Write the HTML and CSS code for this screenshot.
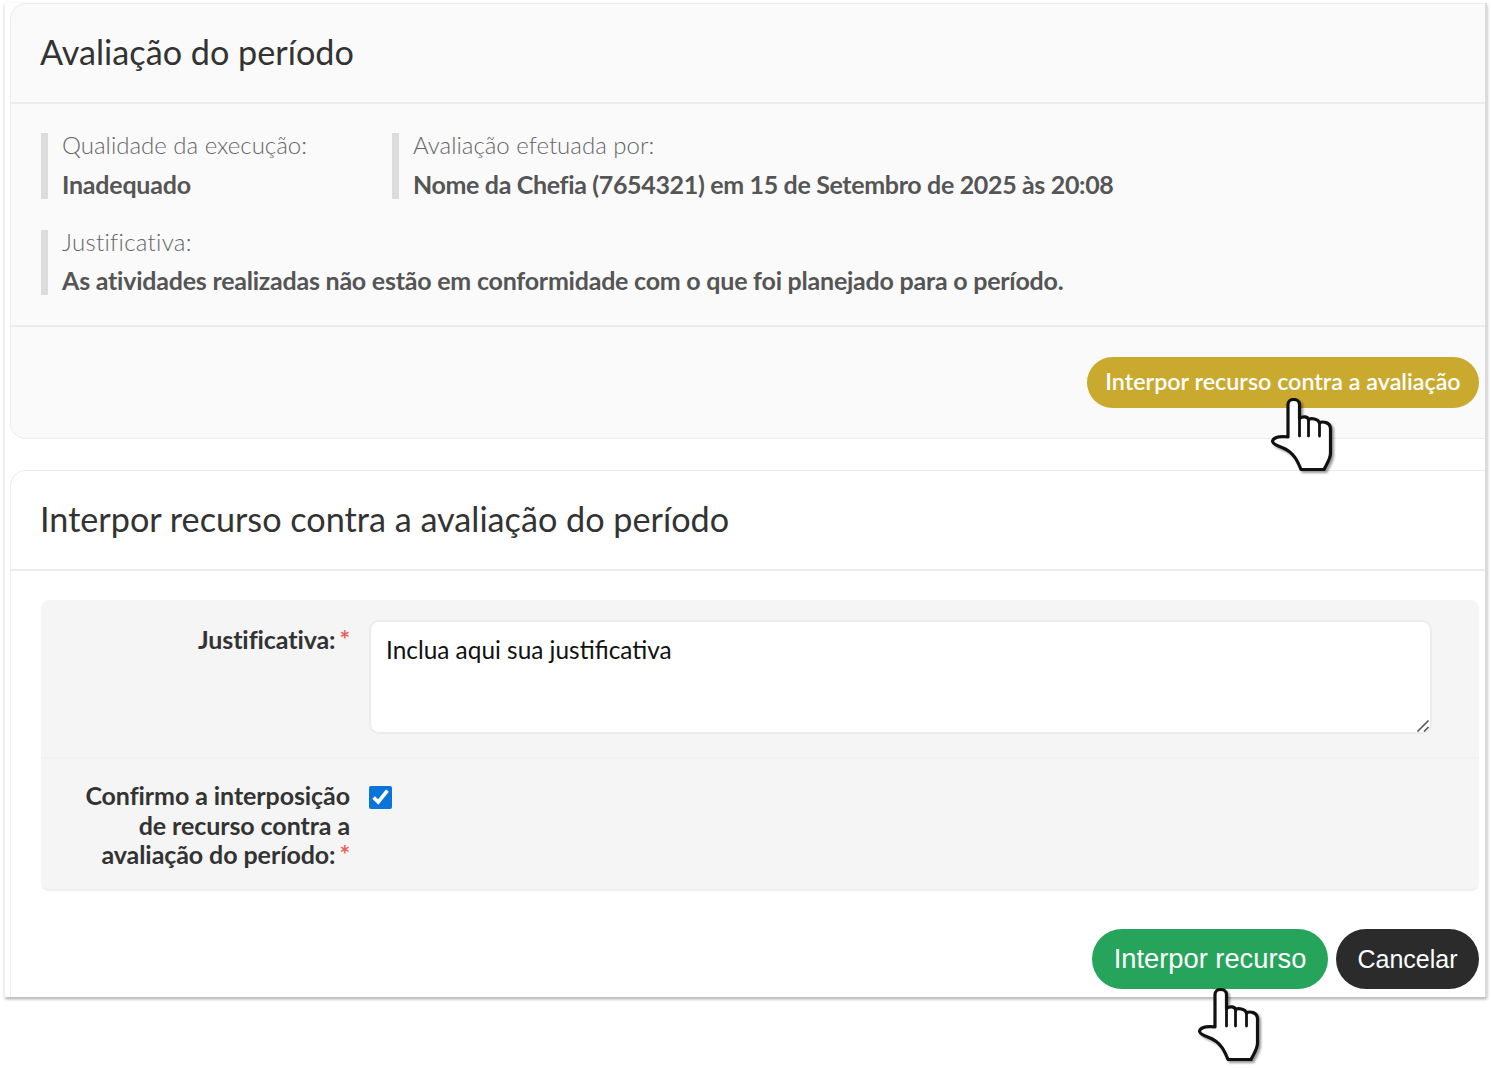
FILE: index.html
```html
<!DOCTYPE html>
<html lang="pt-BR">
<head>
<meta charset="utf-8">
<title>Avaliação do período</title>
<link rel="stylesheet" href="styles.css">
</head>
<body>
<svg class="defs" width="0" height="0" aria-hidden="true">
  <symbol id="hand" viewBox="0 0 62 76">
    <path d="M17 39V6.500C17 3.400 19.400 1.500 22.500 1.500S28.500 3.400 28.500 6.500V20.500C31 18.500 36.500 18 37.500 21.500C40 20 47 20.500 48.500 25C51.500 23 59.500 24 59.500 31V55C59.500 61 56 65 53 71.500H30C27 64 23 54 11 49.500C5 47.500 1.500 45 1.500 43C3 38.500 12 38 17 39Z" fill="#fff" stroke="#111" stroke-width="3.200" stroke-linejoin="round"/>
    <path d="M28.500 20.500V38M37.500 21.500V38M48.500 25V38" fill="none" stroke="#111" stroke-width="2.800" stroke-linecap="round"/>
  </symbol>
</svg>
<main class="frame">
  <section class="card card-muted">
    <h2 class="card-title">Avaliação do período</h2>
    <div class="card-body">
      <div class="info-row">
        <div class="info">
          <span class="info-label">Qualidade da execução:</span>
          <strong class="info-value">Inadequado</strong>
        </div>
        <div class="info">
          <span class="info-label">Avaliação efetuada por:</span>
          <strong class="info-value info-value-tight">Nome da Chefia (7654321) em 15 de Setembro de 2025 às 20:08</strong>
        </div>
      </div>
      <div class="info">
        <span class="info-label info-label-wide">Justificativa:</span>
        <strong class="info-value">As atividades realizadas não estão em conformidade com o que foi planejado para o período.</strong>
      </div>
    </div>
    <div class="card-actions">
      <div class="hand-wrap">
        <button class="btn btn-gold" type="button">Interpor recurso contra a avaliação</button>
        <svg class="hand hand-gold"><use href="#hand"/></svg>
      </div>
    </div>
  </section>

  <section class="card card-white">
    <h2 class="card-title">Interpor recurso contra a avaliação do período</h2>
    <div class="form-wrap">
      <form class="form-panel">
        <div class="form-row form-row-first">
          <label class="form-label" for="just">Justificativa:<span class="req">*</span></label>
          <div class="textarea-wrap">
            <textarea class="textarea" id="just">Inclua aqui sua justificativa</textarea>
            <svg class="grip" viewBox="0 0 14 14" aria-hidden="true"><path d="M1.500 12.500L12.500 1.500M8 12.500L12.500 8" fill="none" stroke="#555" stroke-width="1.600"/></svg>
          </div>
        </div>
        <div class="form-row form-row-second">
          <label class="form-label" for="conf">Confirmo a interposição de recurso contra a avaliação do período:<span class="req">*</span></label>
          <input class="check" id="conf" type="checkbox" checked>
        </div>
      </form>
    </div>
    <div class="form-actions">
      <div class="hand-wrap">
        <button class="btn btn-big btn-green" type="button">Interpor recurso</button>
        <svg class="hand hand-green"><use href="#hand"/></svg>
      </div>
      <button class="btn btn-big btn-dark" type="button">Cancelar</button>
    </div>
  </section>
</main>
</body>
</html>
```
FILE: styles.css
```css
* { box-sizing: border-box; }
html, body { margin: 0; padding: 0; background: #fff; }
body { font-family: Lato, "Liberation Sans", sans-serif; height: 1068px; overflow: hidden; padding-top: 3px; }
.defs { position: absolute; }
.frame {
  width: 1482px;
  height: 994px;
  margin-left: 5px;
  padding-left: 5px;
  border-right: 2px solid #dcdcdc;
  display: flex;
  flex-direction: column;
  gap: 31px;
  background: #fff;
  box-shadow: -1px 0 1px #f0f0f0, 0 2px 3px rgba(0,0,0,.35);
}
.card {
  border: 1px solid #ececec;
  border-right: 0;
  border-radius: 16px 0 0 16px;
}
.card-muted { background: #fafafa; height: 436px; }
.card-white { background: #fff; height: 527px; border-bottom: 0; border-radius: 16px 0 0 0; }
.card-title {
  margin: 0;
  height: 100px;
  padding: 0 0 3px 29px;
  display: flex;
  align-items: center;
  font-weight: 400;
  font-size: 34.200px;
  color: #333;
  border-bottom: 2px solid #ececec;
}
.card-body {
  padding: 29px 0 30px 30px;
  display: flex;
  flex-direction: column;
  gap: 31px;
  height: 223px;
  border-bottom: 2px solid #ececec;
}
.info-row { display: flex; gap: 85px; }
.info {
  display: flex;
  flex-direction: column;
  border-left: 7px solid #dcdcdc;
  padding-left: 14px;
  height: 66px;
  justify-content: space-between;
  color: #666;
}
.info-label { font-weight: 300; font-size: 24px; line-height: 24px; }
.info-label-wide { letter-spacing: .3px; }
.info-value { font-weight: 700; font-size: 25px; line-height: 28px; margin-bottom: 1px; color: #555; letter-spacing: -.23px; }
.info-value-tight { letter-spacing: -.34px; }
.card-actions { display: flex; justify-content: flex-end; padding: 30px 6px 0 0; }
.hand-wrap { position: relative; }
.btn {
  display: block;
  border: 0;
  border-radius: 30px;
  color: #fff;
  cursor: pointer;
}
.btn-gold {
  width: 392px;
  height: 51px;
  padding: 0 0 3px;
  background: #c9aa2e;
  font-family: Lato, sans-serif;
  font-size: 23.300px;
  font-weight: 600;
}
.btn-big { height: 60px; font-family: "Liberation Sans", Arial, sans-serif; }
.btn-green { width: 236px; background: #26a45c; font-size: 27.300px; }
.btn-dark { width: 143px; background: #2b2b2b; font-size: 25px; }
.hand {
  position: absolute;
  width: 62px;
  height: 76px;
  filter: drop-shadow(2px 2px 1px rgba(0,0,0,.4));
  pointer-events: none;
}
.hand-gold { left: 184px; top: 41px; }
.hand-green { left: 106px; top: 59px; }
.form-wrap { padding: 29px 6px 0 30px; }
.form-panel { background: #f5f5f5; border-radius: 8px; height: 291px; border-bottom: 2px solid #eee; }
.form-row { display: flex; gap: 19px; }
.form-row-first { height: 158px; padding-top: 20px; border-bottom: 1px solid #f0f0f0; }
.form-row-second { height: 131px; padding-top: 23px; }
.form-label {
  width: 309px;
  flex: none;
  padding-left: 32px;
  text-align: right;
  font-size: 25px;
  line-height: 29.500px;
  font-weight: 700;
  color: #333;
  letter-spacing: -.08px;
}
.form-row-first .form-label { padding-top: 5px; }
.req { color: #e8605f; font-weight: 700; margin-left: 4px; }
.textarea-wrap { position: relative; height: 114px; }
.textarea {
  display: block;
  width: 1063px;
  height: 114px;
  border: 2px solid #ececec;
  border-radius: 10px;
  padding: 13px 15px;
  font-family: Lato, sans-serif;
  font-size: 24.400px;
  line-height: 30px;
  color: #111;
  background: #fff;
  outline: none;
  resize: none;
}
.grip { position: absolute; right: 2px; bottom: 1px; width: 14px; height: 14px; }
.check { width: 23px; height: 23px; margin: 5px 0 0; accent-color: #0b74d9; }
.form-actions { display: flex; justify-content: flex-end; gap: 8px; padding: 38px 6px 0 0; }
```
